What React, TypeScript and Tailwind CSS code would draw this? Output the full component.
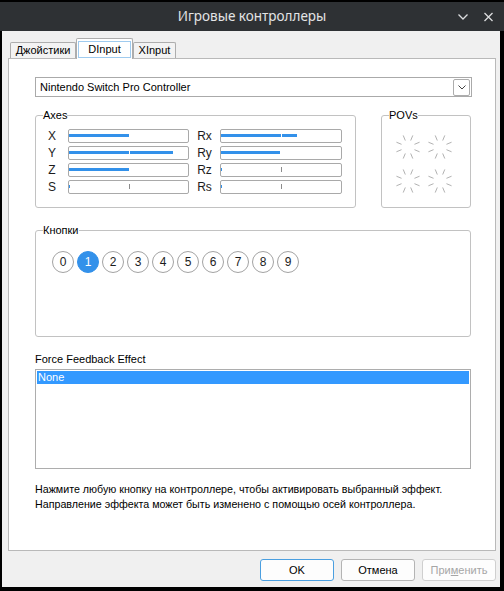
import React from "react";

type Seg = [number, number];

type AxisRow = {
  l: string;
  lSegs: Seg[];
  lTick?: boolean;
  r: string;
  rSegs: Seg[];
  rTick?: boolean;
};

const rows: AxisRow[] = [
  { l: "X", lSegs: [[0, 60]], r: "Rx", rSegs: [[0, 60], [61, 15]] },
  { l: "Y", lSegs: [[0, 60], [61, 43]], r: "Ry", rSegs: [[0, 59]] },
  { l: "Z", lSegs: [[0, 60]], r: "Rz", rSegs: [[0, 1]], rTick: true },
  { l: "S", lSegs: [[0, 1]], lTick: true, r: "Rs", rSegs: [[0, 1]], rTick: true },
];

const AxisBar = ({ segs, tick, width }: { segs: Seg[]; tick?: boolean; width: number }) => (
  <div className="relative h-[14px] rounded-[2px] border border-[#a9a9a9] bg-white" style={{ width }}>
    {segs.map(([left, w], i) => (
      <div key={i} className="absolute top-[4px] h-[3px] bg-[#3391ea]" style={{ left, width: w }} />
    ))}
    {tick && <div className="absolute left-[60px] top-[3px] h-[5px] w-px bg-[#8c8c8c]" />}
  </div>
);

const Pov = () => (
  <svg width="28" height="28" viewBox="0 0 28 28">
    {Array.from({ length: 8 }).map((_, i) => {
      const a = ((22.5 + 45 * i) * Math.PI) / 180;
      return (
        <line
          key={i}
          x1={14 + 7 * Math.cos(a)}
          y1={14 + 7 * Math.sin(a)}
          x2={14 + 12.5 * Math.cos(a)}
          y2={14 + 12.5 * Math.sin(a)}
          stroke="#a8a8a8"
          strokeWidth="0.9"
        />
      );
    })}
  </svg>
);

const Group = ({ title, className, children }: { title: string; className: string; children?: React.ReactNode }) => (
  <div className={`relative rounded-[3px] border border-[#c2c2c2] ${className}`}>
    {/* caption sits on top of the frame line */}
    <span className="absolute -top-[7px] left-[7px] bg-white text-[11px] leading-[13px]">{title}</span>
    {children}
  </div>
);

const App = () => {
  return (
    <div className="flex h-[591px] w-[504px] flex-col overflow-hidden bg-black font-['Liberation_Sans',Arial,sans-serif] text-[11px] text-black">
      {/* title bar */}
      <div className="mt-[2px] flex h-[29px] shrink-0 items-center bg-[#2e3134]">
        <div className="w-[60px]" />
        <div className="flex-1 text-center font-['Noto_Sans',sans-serif] text-[13.5px] text-[#e3e4e5]">
          Игровые контроллеры
        </div>
        <div className="flex w-[60px] items-center justify-end gap-[16px] pr-[11px]">
          <svg width="10" height="10" viewBox="0 0 10 10">
            <polyline points="0.5,2.5 5,7 9.5,2.5" fill="none" stroke="#dcdddf" strokeWidth="1.3" />
          </svg>
          <svg width="9" height="10" viewBox="0 0 9 10">
            <path d="M0.5 1 L8.5 9 M8.5 1 L0.5 9" stroke="#dcdddf" strokeWidth="1.3" />
          </svg>
        </div>
      </div>

      {/* body */}
      <div className="mb-[4px] ml-[2px] mr-[4px] flex flex-1 flex-col bg-[#f0f0f0]">
        {/* tabs */}
        <div className="flex h-[27px] shrink-0 items-end pl-[8px]">
          <div className="flex h-[16px] w-[66px] items-center justify-center rounded-t-[2px] border border-b-0 border-[#adadad] bg-[#f3f3f3]">
            Джойстики
          </div>
          <div className="relative z-10 -mb-px h-[21px] w-[57px] rounded-t-[2px] border border-b-0 border-[#adadad] bg-white">
            <div className="mx-[1px] mt-[2px] flex h-[17px] items-center justify-center border border-[#9fcbef]">
              DInput
            </div>
          </div>
          <div className="flex h-[16px] w-[43px] items-center justify-center rounded-t-[2px] border border-b-0 border-[#adadad] bg-[#f3f3f3]">
            XInput
          </div>
        </div>

        {/* tab pane */}
        <div className="ml-[6px] mr-[4px] flex h-[493px] shrink-0 flex-col border border-[#b9b9b9] bg-white pl-[26px]">
          <div className="mt-[18px] flex h-[20px] w-[437px] items-center justify-between border border-[#aaaaaa] bg-white pl-[4px] pr-[1px]">
            <span>Nintendo Switch Pro Controller</span>
            <div className="flex h-[17px] w-[17px] items-center justify-center rounded-[2px] border border-[#adadad] bg-white">
              <svg width="8" height="5" viewBox="0 0 8 5">
                <polyline points="0.5,0.5 4,4 7.5,0.5" fill="none" stroke="#444" strokeWidth="1" />
              </svg>
            </div>
          </div>

          <div className="mt-[18px] flex gap-[25px]">
            <Group title="Axes" className="h-[93px] w-[321px] pt-[13px]">
              <div className="flex flex-col gap-[3px]">
                {rows.map((row) => (
                  <div key={row.l} className="flex h-[14px] items-center">
                    <span className="w-[32px] text-center text-[12px] leading-[14px] text-[#1c1c1c]">{row.l}</span>
                    <AxisBar segs={row.lSegs} tick={row.lTick} width={121} />
                    <span className="w-[31px] text-center text-[12px] leading-[14px] text-[#1c1c1c]">{row.r}</span>
                    <AxisBar segs={row.rSegs} tick={row.rTick} width={122} />
                  </div>
                ))}
              </div>
            </Group>
            <Group title="POVs" className="h-[93px] w-[90px] pl-[12px] pt-[17px]">
              <div className="grid grid-cols-[28px_28px] gap-x-[4px] gap-y-[6px]">
                <Pov />
                <Pov />
                <Pov />
                <Pov />
              </div>
            </Group>
          </div>

          <Group title="Кнопки" className="mt-[22px] h-[107px] w-[436px] pl-[16px] pt-[20px]">
            <div className="flex gap-[3px]">
              {Array.from({ length: 10 }).map((_, i) => (
                <div
                  key={i}
                  className={
                    i === 1
                      ? "flex h-[22px] w-[22px] items-center justify-center rounded-full border border-[#3391ea] bg-[#3391ea] text-[12px] text-white"
                      : "flex h-[22px] w-[22px] items-center justify-center rounded-full border border-[#a3a3a3] bg-white text-[12px] text-[#1c1c1c]"
                  }
                >
                  {i}
                </div>
              ))}
            </div>
          </Group>

          <div className="mt-[16px] leading-[13px]">Force Feedback Effect</div>
          <div className="mt-[3px] h-[100px] w-[436px] border border-[#adadad] bg-white p-[1px]">
            <div className="h-[13px] bg-[#3399ff] pl-[1px] leading-[13px] text-white">None</div>
          </div>

          <p className="mt-[13px] text-[10.7px] leading-[15px]">
            Нажмите любую кнопку на контроллере, чтобы активировать выбранный эффект.
            <br />
            Направление эффекта может быть изменено с помощью осей контроллера.
          </p>
        </div>

        {/* dialog buttons */}
        <div className="flex justify-end gap-[7px] pr-[4px] pt-[8px]">
          <button className="h-[22px] w-[74px] rounded-[3px] border border-[#4a9fe0] bg-[#fdfdfd]">OK</button>
          <button className="h-[22px] w-[74px] rounded-[3px] border border-[#b4b4b4] bg-[#fdfdfd]">Отмена</button>
          <button className="h-[22px] w-[74px] rounded-[3px] border border-[#cfcfcf] bg-[#fdfdfd] text-[#a6a6a6]">
            При<span className="underline">м</span>енить
          </button>
        </div>
      </div>
    </div>
  );
};

export default App;
